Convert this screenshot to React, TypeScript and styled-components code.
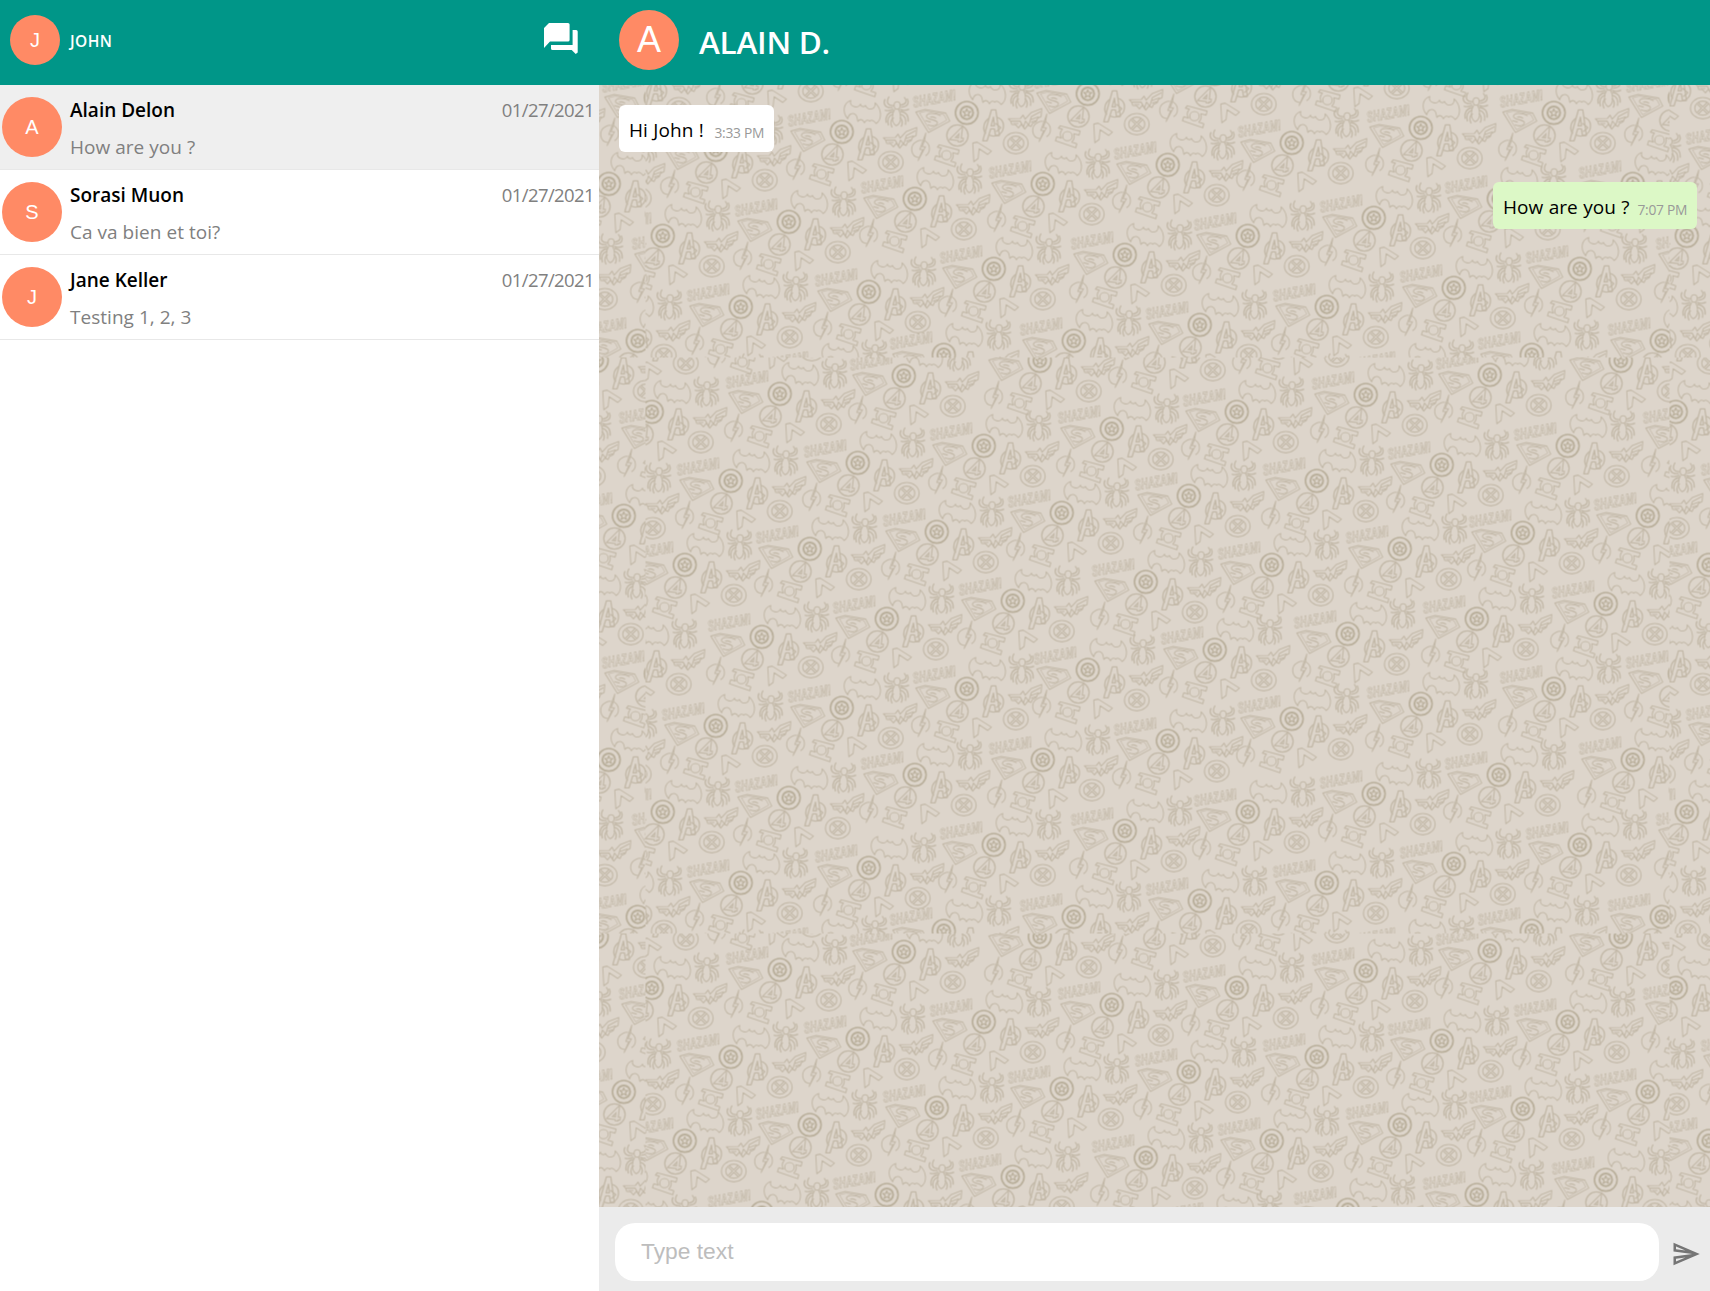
import React from "react";
import styled, { createGlobalStyle } from "styled-components";

const GlobalStyle = createGlobalStyle`
  *, *::before, *::after { box-sizing: border-box; }
  html, body, #root { height: 100%; }
  body { margin: 0; background: #fff; font-family: "Open Sans", "Noto Sans", sans-serif; color: #000; overflow: hidden; }
`;

const Shell = styled.div`
  display: grid;
  grid-template-columns: 599px 1fr;
  height: 100vh;
`;

const Sidebar = styled.aside`
  display: flex;
  flex-direction: column;
  background: #fff;
  min-width: 0;
`;

const Bar = styled.header<{ $pad: string; $gap: number }>`
  display: flex;
  align-items: flex-start;
  gap: ${(p) => p.$gap}px;
  height: 85px;
  flex: none;
  padding: ${(p) => p.$pad};
  background: #009688;
  color: #fff;
`;

const Avatar = styled.div<{ $size: number; $font: number }>`
  display: flex;
  align-items: center;
  justify-content: center;
  flex: none;
  width: ${(p) => p.$size}px;
  height: ${(p) => p.$size}px;
  border-radius: 50%;
  background: #ff8a65;
  color: #fff;
  font: 400 ${(p) => p.$font}px/1 "Liberation Sans", Arial, sans-serif;
`;

const OwnName = styled.span`
  flex: 1;
  font-size: 15.5px;
  font-weight: 600;
  line-height: 50px;
  padding-top: 1px;
  letter-spacing: 0.4px;
`;

const PeerName = styled.h1`
  margin: 0;
  font-size: 31.5px;
  font-weight: 600;
  line-height: 63px;
  letter-spacing: -0.25px;
`;

const IconButton = styled.button<{ $color: string }>`
  display: flex;
  padding: 0;
  border: 0;
  background: none;
  color: ${(p) => p.$color};
`;

const Row = styled.div<{ $active?: boolean }>`
  display: flex;
  align-items: flex-start;
  gap: 8px;
  height: 85px;
  padding: 12px 5px 0 2px;
  border-bottom: 1px solid #e8e8e8;
  background: ${(p) => (p.$active ? "#efefef" : "#fff")};
`;

const RowBody = styled.div`
  flex: 1;
  display: grid;
  grid-template-rows: 26px 37px;
  min-width: 0;
`;

const RowTop = styled.div`
  display: flex;
  justify-content: space-between;
  line-height: 26px;
`;

const Name = styled.span`
  font-size: 19px;
  font-weight: 600;
  letter-spacing: 0;
`;

const DateText = styled.span`
  font-size: 18.5px;
  line-height: 25px;
  color: #808080;
  letter-spacing: -0.6px;
`;

const Preview = styled.span`
  font-size: 19px;
  line-height: 48px;
  color: #808080;
  letter-spacing: 0.03px;
`;

const Chat = styled.main`
  display: flex;
  flex-direction: column;
  min-width: 0;
`;

const Messages = styled.section`
  position: relative;
  flex: 1;
  display: flex;
  flex-direction: column;
  gap: 30px;
  padding: 20px 13px 0 20px;
  background: #ddd5cb;
  overflow: hidden;
`;

const Wallpaper = styled.svg`
  position: absolute;
  inset: 0;
  width: 100%;
  height: 100%;
`;

const Bubble = styled.div<{ $mine?: boolean }>`
  position: relative;
  align-self: ${(p) => (p.$mine ? "flex-end" : "flex-start")};
  display: flex;
  align-items: flex-start;
  justify-content: space-between;
  width: ${(p) => (p.$mine ? 204 : 155)}px;
  height: 47px;
  padding: 0 10px;
  border-radius: 6px;
  background: ${(p) => (p.$mine ? "#dcf8c6" : "#fff")};
  white-space: nowrap;
`;

const BubbleText = styled.span`
  font-size: 19px;
  line-height: 50px;
  letter-spacing: 0.05px;
  word-spacing: 0.4px;
`;

const Time = styled.time`
  font-size: 13.8px;
  line-height: 55px;
  color: #999;
  letter-spacing: -0.3px;
`;

const Composer = styled.form`
  display: flex;
  align-items: flex-start;
  gap: 12px;
  height: 84px;
  flex: none;
  padding: 16px 9px 0 16px;
  background: #ebebeb;
`;

const Input = styled.input`
  flex: 1;
  min-width: 0;
  height: 58px;
  padding: 0 26px 2px;
  border: 0;
  border-radius: 20px;
  outline: 0;
  background: #fff;
  font: 400 22.8px "Liberation Sans", Arial, sans-serif;
  &::placeholder { color: #bdbdbd; opacity: 1; }
`;

const SendSlot = styled.div`
  padding-top: 16px;
`;

/* One cluster of twelve emblems, drawn at three times its final size around the shield. */
const Emblems = () => (
  <g id="emblems" transform="scale(.3333) translate(-330 -209)" fill="none" stroke="#c2b8a7" strokeWidth="3.2" strokeLinejoin="round">
    <g stroke="#b9af9b">
      <circle cx="330" cy="209" r="34" strokeWidth="5" />
      <circle cx="330" cy="209" r="19" strokeWidth="6" />
      <path strokeWidth="3.5" d="M330 197l3 8 9 0-7 6 3 9-8-5-8 5 3-9-7-6 9 0z" />
    </g>
    <path d="M357 115C335 122 330 150 348 170C350 155 362 150 372 158C376 162 377 170 378 178C384 170 392 170 398 182C402 174 408 172 414 177C418 172 426 174 433 184C452 172 450 140 430 122C432 135 424 143 410 140C404 138 402 134 401 130L396 134L389 132L386 126C382 134 374 136 366 133C358 130 354 124 357 115Z" />
    <g>
      <ellipse cx="496" cy="130" rx="9" ry="11" />
      <path d="M489 141c-10 16-11 40 4 50 17-8 17-33 7-50" />
      <path d="M487 130c-18 2-26-8-15-27M483 136c-26 4-29-14-23-25M485 142c-10 4-18 5-26 2M505 129c18-2 23-12 12-24M507 135c25-1 25-15 19-26M504 142c11 4 20 3 28-1M485 148c-18 3-25 14-22 34M485 156c-15 4-19 18-15 34M486 166c-10 8-10 20-5 30M505 148c18 1 26 12 24 31M505 156c14 4 19 17 16 32M504 166c9 8 9 18 4 28" strokeWidth="4" />
    </g>
    <text x="171" y="193" transform="rotate(-10 171 193)" fontFamily="Liberation Sans, sans-serif" fontWeight="700" fontStyle="italic" fontSize="46" textLength="130" lengthAdjust="spacingAndGlyphs" strokeWidth="2.4">SHAZAM!</text>
    <g>
      <path d="M177 207l28-8 62 11 12 24-64 34z" />
      <path d="M188 209l20-5 53 10 9 17-52 29z" strokeWidth="2.4" />
      <path d="M252 218c-17-9-43-10-43 2 0 11 35 8 33 20-2 8-17 11-29 5M238 225c-8-4-16-4-18-2M205 232l17 5" strokeWidth="3.4" />
    </g>
    <circle cx="302" cy="277" r="32" strokeWidth="4" />
    <g strokeLinejoin="miter">
      <path d="M308 298l4-37-25 25 34 4" strokeWidth="12" />
      <path d="M308 295l4-34-25 25 31 4" stroke="#ddd5cb" strokeWidth="5" />
    </g>
    <g strokeWidth="4">
      <path d="M404 200h13l11 77h-12l-3-20h-11l-11 36h-13z" />
      <path d="M410 222l-7 26h10zM416 240l16 14-14 12" />
      <path d="M397 225c-18 12-20 34-10 47M398 276c22 9 44-6 42-30-1-12-8-20-19-23" />
    </g>
    <g strokeWidth="3.4">
      <path d="M455 227l36-1 8-10 6 12 14-15 5-5 31-12-2 24-11 6-4 10-11 5-4 9-10-4-9 12-10-15-9 11-8-9-12-1-3-9z" />
      <path d="M462 234h28l10 18 6-18 10 12 8-26 27-14M469 241h16M523 229l23-8M523 237l17-5" />
    </g>
    <g strokeWidth="3.5">
      <ellipse cx="477" cy="300" rx="37" ry="32" />
      <ellipse cx="477" cy="300" rx="24" ry="21" />
      <path d="M462 286l30 28M492 285l-30 30" strokeWidth="9" />
      <path d="M462 286l30 28M492 285l-30 30" stroke="#ddd5cb" strokeWidth="3" />
    </g>
    <path d="M202 292c20 9 21 36 4 46M188 344c-28-3-31-38-8-49 6-3 12-4 16-3M207 270l-18 49h9l-14 33 22-41h-10l8-22z" />
    <path d="M247 305l60 16-3 12-16-4c3 10 0 19-6 25l15 5-3 12-61-21 4-12 14 4c-5-8-4-19 3-27l-12-3z" strokeWidth="3.4" />
    <circle cx="269" cy="336" r="14" strokeWidth="3.4" />
    <path d="M348 300l13-3 43 27-11 10-26-17-3 29-13 10z" />
  </g>
);

const CLUSTERS: [number, number][] = [
  [904, 376], [780, 394], [652, 412], [1237, 412], [1366, 395], [1490, 375],
  [1112, 429], [984, 446], [858, 463], [731, 481], [1568, 446], [1442, 465], [1317, 481], [1189, 496],
  [1062, 513], [937, 532], [810, 549], [685, 565], [1648, 516], [1523, 533], [1400, 549], [1272, 565], [1146, 582],
  [1013, 601], [887, 619], [762, 637], [1606, 604], [1477, 619], [1348, 634], [1215, 650],
  [1088, 670], [967, 689], [842, 708], [716, 726], [1554, 689], [1421, 704], [1292, 719], [1168, 741],
  [1043, 760], [915, 775], [789, 798], [663, 812], [1633, 760], [1499, 775], [1374, 794], [1248, 812],
  [1125, 831], [994, 845], [869, 868], [741, 883], [1580, 845], [1454, 864], [1327, 883], [1200, 901],
  [1074, 917], [1662, 917], [944, 931], [1532, 931], [1040, 361], [1621, 361],
  [604, 498], [630, 654], [590, 744], [615, 901], [1697, 429], [1731, 586], [1680, 674], [1710, 831],
  [1164, 340], [1288, 326], [637, 333], [763, 320], [820, 951], [697, 965], [1407, 951], [1283, 965],
];

const Background = () => (
  <Wallpaper aria-hidden="true">
    <defs>
      <Emblems />
      <pattern id="tile" x="46.5" y="272.5" width="1024" height="576" patternUnits="userSpaceOnUse">
        {CLUSTERS.map(([x, y], i) => (
          <use key={i} href="#emblems" x={x - 645.7} y={y - 357.7} />
        ))}
      </pattern>
    </defs>
    <rect width="100%" height="100%" fill="url(#tile)" />
  </Wallpaper>
);

const CHATS = [
  { name: "Alain Delon", text: "How are you ?", date: "01/27/2021" },
  { name: "Sorasi Muon", text: "Ca va bien et toi?", date: "01/27/2021" },
  { name: "Jane Keller", text: "Testing 1, 2, 3", date: "01/27/2021" },
];

export default function App() {
  return (
    <>
      <GlobalStyle />
      <Shell>
        <Sidebar>
          <Bar $pad="15px 17px 0 10px" $gap={10}>
            <Avatar $size={50} $font={20}>J</Avatar>
            <OwnName>JOHN</OwnName>
            <IconButton $color="#fff" aria-label="New chat">
              <svg width="42" height="48" viewBox="0 0 42 48" fill="currentColor">
                <path d="M9 8h19a1.6 1.6 0 0 1 1.6 1.6V25a1.6 1.6 0 0 1-1.6 1.6H10L4 33V13z" />
                <path d="M32.6 15h3.5a1.6 1.6 0 0 1 1.6 1.6V37.5l-2 1.5-4-4H12.6a1.6 1.6 0 0 1-1.6-1.6V30h21.6z" />
              </svg>
            </IconButton>
          </Bar>
          {CHATS.map((c, i) => (
            <Row key={c.name} $active={i === 0}>
              <Avatar $size={60} $font={20}>{c.name[0]}</Avatar>
              <RowBody>
                <RowTop>
                  <Name>{c.name}</Name>
                  <DateText>{c.date}</DateText>
                </RowTop>
                <Preview>{c.text}</Preview>
              </RowBody>
            </Row>
          ))}
        </Sidebar>
        <Chat>
          <Bar $pad="10px 20px 0" $gap={20}>
            <Avatar $size={60} $font={36}>A</Avatar>
            <PeerName>ALAIN D.</PeerName>
          </Bar>
          <Messages>
            <Background />
            <Bubble>
              <BubbleText>Hi John !</BubbleText>
              <Time>3:33 PM</Time>
            </Bubble>
            <Bubble $mine>
              <BubbleText>How are you ?</BubbleText>
              <Time>7:07 PM</Time>
            </Bubble>
          </Messages>
          <Composer>
            <Input placeholder="Type text" />
            <SendSlot>
              <IconButton type="button" $color="#757575" aria-label="Send">
                <svg width="30" height="30" viewBox="0 0 24 24" fill="currentColor">
                  <path d="M4.01 6.03l7.51 3.22-7.52-1 .01-2.22m7.5 8.72L4 17.97v-2.22l7.51-1M2.01 3L2 10l15 2-15 2 .01 7L23 12 2.01 3z" />
                </svg>
              </IconButton>
            </SendSlot>
          </Composer>
        </Chat>
      </Shell>
    </>
  );
}
